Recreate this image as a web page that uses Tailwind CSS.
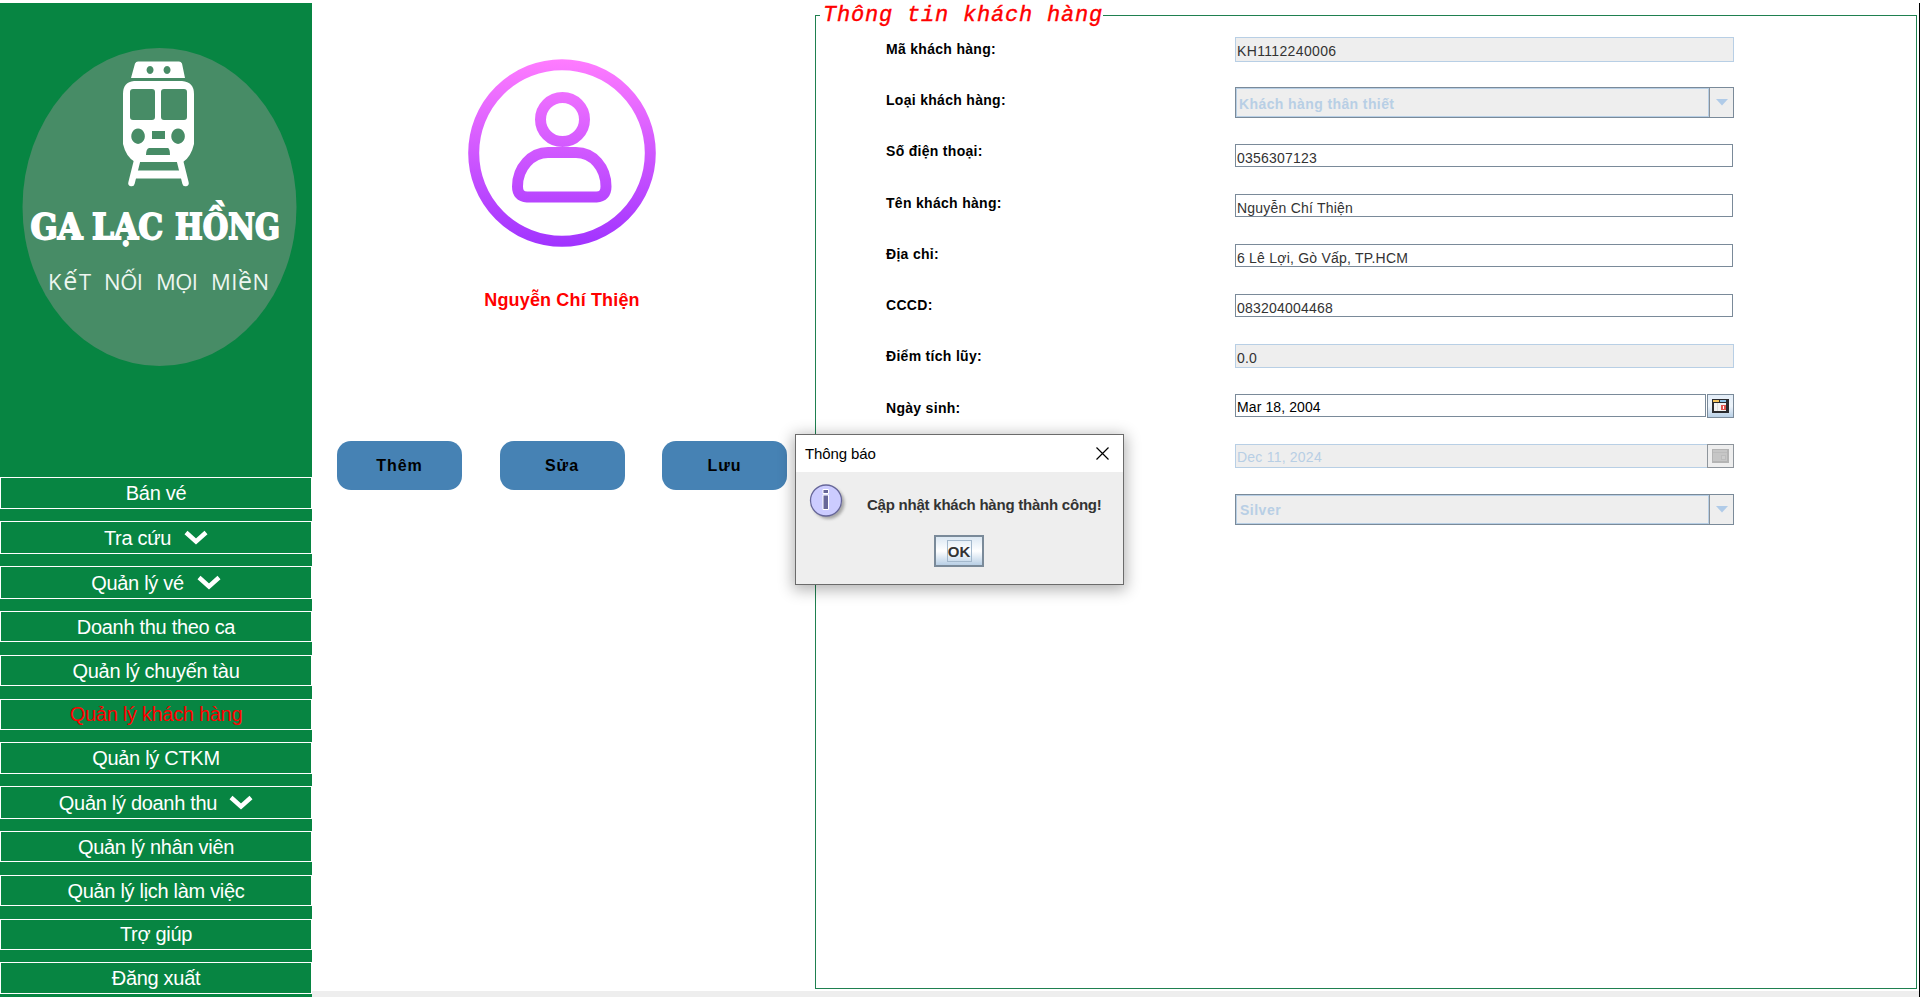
<!DOCTYPE html>
<html lang="vi">
<head>
<meta charset="utf-8">
<title>Ga Lạc Hồng</title>
<script src="https://cdn.jsdelivr.net/npm/@tailwindcss/browser@4"></script>
</head>
<body class="bg-white">
<div class="relative flex h-[997px] w-[1920px] overflow-hidden bg-white pt-[3px] font-['Liberation_Sans',Arial,sans-serif] text-black">
  <aside class="flex h-[994px] w-[312px] shrink-0 flex-col bg-[#078542]">
    <div class="h-[474px] shrink-0">
      <svg class="block overflow-visible" width="312" height="474" viewBox="0 3 312 474">
        <ellipse cx="159.500" cy="207" rx="137" ry="159" fill="#478c66"/>
        <g fill="#fff">
          <path fill-rule="evenodd" d="M138 61.500h41q2 0 3 2l3 14.500h-54l4-14.500q1-2 3-2zM150 66a3.500 4 0 1 0 .1 0zM167 66a3.500 4 0 1 0 .1 0z"/>
          <path fill-rule="evenodd" d="M134 81h48q12 1 12 13v50q-3 13-11 18h-48q-9-5-12-18V94q0-12 11-13zM133 89q-3 0-3 3v25q0 3 3 3h19q3 0 3-3V92q0-3-3-3zM164 89q-3 0-3 3v25q0 3 3 3h20q3 0 3-3V92q0-3-3-3zM138 128.500a6.800 7.700 0 1 0 .1 0zM178 128.500a6.800 7.700 0 1 0 .1 0zM152 131v8h13v-8zM149 148q-3 1-3 7h24q0-6-2-7z"/>
        </g>
        <path d="M137 161L131.500 183M180 161L185.500 183" stroke="#fff" stroke-width="6.500" stroke-linecap="round"/>
        <path d="M135 174.500h48" stroke="#fff" stroke-width="8"/>
        <g fill="#fff" stroke="#fff" stroke-width="1.800" font-family="DejaVu Serif, serif" font-weight="700" font-size="34.500">
          <text x="30.500" y="239" textLength="52" lengthAdjust="spacingAndGlyphs">GA</text>
          <text x="92" y="239" textLength="71" lengthAdjust="spacingAndGlyphs">LẠC</text>
          <text x="175" y="239" textLength="105" lengthAdjust="spacingAndGlyphs">HỒNG</text>
        </g>
        <g fill="#eef6f0" font-family="Open Sans, sans-serif" font-weight="400" font-size="22">
          <text x="48" y="290" textLength="43">K<tspan font-size="25">ế</tspan>T</text>
          <text x="104" y="290" textLength="39">NỐI</text>
          <text x="156" y="290" textLength="42">MỌI</text>
          <text x="211" y="290" textLength="58">MI<tspan font-size="25">ề</tspan>N</text>
        </g>
      </svg>
    </div>
    <nav class="flex flex-col text-[20px] tracking-[-0.3px] text-white">
      <a class="mb-[12px] flex h-[32px] items-center justify-center border border-white pb-px"><span>Bán vé</span></a>
      <a class="mb-[12px] flex h-[33px] items-center justify-center border border-white"><span>Tra cứu</span><svg class="ml-[13px]" width="24" height="15" viewBox="0 0 24 15"><path d="M2 2.500L12 11.500l10-9" fill="none" stroke="#fff" stroke-width="4.500"/></svg></a>
      <a class="mb-[12px] flex h-[33px] items-center justify-center border border-white"><span>Quản lý vé</span><svg class="ml-[13px]" width="24" height="15" viewBox="0 0 24 15"><path d="M2 2.500L12 11.500l10-9" fill="none" stroke="#fff" stroke-width="4.500"/></svg></a>
      <a class="mb-[13px] flex h-[31px] items-center justify-center border border-white"><span>Doanh thu theo ca</span></a>
      <a class="mb-[13px] flex h-[31px] items-center justify-center border border-white"><span>Quản lý chuyến tàu</span></a>
      <a class="mb-[12px] flex h-[31px] items-center justify-center border border-white pb-px text-[#f00]"><span>Quản lý khách hàng</span></a>
      <a class="mb-[12px] flex h-[32px] items-center justify-center border border-white"><span>Quản lý CTKM</span></a>
      <a class="mb-[12px] flex h-[33px] items-center justify-center border border-white"><span>Quản lý doanh thu</span><svg class="ml-[12px]" width="24" height="15" viewBox="0 0 24 15"><path d="M2 2.500L12 11.500l10-9" fill="none" stroke="#fff" stroke-width="4.500"/></svg></a>
      <a class="mb-[13px] flex h-[31px] items-center justify-center border border-white"><span>Quản lý nhân viên</span></a>
      <a class="mb-[13px] flex h-[31px] items-center justify-center border border-white"><span>Quản lý lịch làm việc</span></a>
      <a class="mb-[12px] flex h-[31px] items-center justify-center border border-white pb-0.5"><span>Trợ giúp</span></a>
      <a class="flex h-[32px] items-center justify-center border border-white"><span>Đăng xuất</span></a>
    </nav>
  </aside>

  <main class="flex h-[994px] grow flex-col border-r border-black">
    <div class="flex h-[988px]">
      <section class="flex w-[503px] shrink-0 flex-col items-center pt-[56px] pr-[3px]">
        <svg class="block" width="188" height="188" viewBox="0 0 188 188" fill="none">
          <defs><linearGradient id="g" gradientUnits="userSpaceOnUse" x1="94" y1="0" x2="94" y2="188"><stop offset="0" stop-color="#ff7cff"/><stop offset="1" stop-color="#a033ff"/></linearGradient></defs>
          <g stroke="url(#g)" stroke-width="11">
            <circle cx="94" cy="94" r="88.300"/>
            <circle cx="94.500" cy="60.500" r="22"/>
            <path d="M80 93.500h28c17 0 30 15 30 34q0 10-9.500 10.500H59q-9.500-.5-9.500-10.500c0-19 14-34 30.500-34z"/>
          </g>
        </svg>
        <h2 class="mt-[43px] text-[18px] leading-[21px] font-bold tracking-[0.15px] text-[#f00]"><span>Nguyễn Chí Thiện</span></h2>
        <div class="mt-[130px] flex gap-[37.5px] text-[16px] font-bold tracking-[1px]">
          <button class="h-[49px] w-[125px] rounded-[14px] bg-[#4682b4]">Thêm</button>
          <button class="h-[49px] w-[125px] rounded-[14px] bg-[#4682b4]">Sửa</button>
          <button class="h-[49px] w-[125px] rounded-[14px] bg-[#4682b4]">Lưu</button>
        </div>
      </section>

      <section class="relative mt-[12px] h-[974px] w-[1102px] border border-[#1f8050]">
        <h1 class="absolute top-[-14px] left-[4px] h-[26px] bg-white pl-[3px] font-['Liberation_Mono','Courier_New',monospace] text-[22px] leading-[27px] tracking-[0.8px] whitespace-pre text-[#f00] italic [-webkit-text-stroke:0.4px_#f00]">Thông tin khách hàng</h1>
        <div class="flex pl-[70px]">
          <div class="flex w-[349px] flex-col pt-[23px] text-[14px] leading-[21px] font-bold tracking-[0.3px]">
            <label class="h-[51px]">Mã khách hàng:</label>
            <label class="h-[51px]">Loại khách hàng:</label>
            <label class="h-[52px]">Số điện thoại:</label>
            <label class="h-[51px]">Tên khách hàng:</label>
            <label class="h-[51px]">Địa chỉ:</label>
            <label class="h-[51px]">CCCD:</label>
            <label class="h-[52px]">Điểm tích lũy:</label>
            <label class="h-[51px]">Ngày sinh:</label>
          </div>
          <div class="flex w-[499px] flex-col pt-[21px] text-[14px] tracking-[0.22px] text-[#333]">
            <div class="flex h-[25px] items-center border border-[#b8cfe5] bg-[#eee] pt-[3px] pl-px tracking-[0.35px]">KH1112240006</div>
            <div class="mt-[25px] flex h-[31px] border border-[#7a8a99] font-bold tracking-[0.4px] text-[#b8cfe5]">
              <div class="flex grow items-center border border-[#b8cfe5] bg-[#eee] pt-[3px] pl-[2px]">Khách hàng thân thiết</div>
              <div class="flex w-[24px] items-center justify-center border-l border-[#8a929a] bg-[#eee]"><svg width="12" height="7" viewBox="0 0 12 7"><path d="M0 0h12L6 6.500z" fill="#b0cbe8"/></svg></div>
            </div>
            <div class="mt-[26px] mr-px flex h-[23px] items-center border border-[#7a8a99] pt-[5px] pl-px">0356307123</div>
            <div class="mt-[27px] mr-px flex h-[23px] items-center border border-[#7a8a99] pt-[5px] pl-px">Nguyễn Chí Thiện</div>
            <div class="mt-[27px] mr-px flex h-[23px] items-center border border-[#7a8a99] pt-[5px] pl-px">6 Lê Lợi, Gò Vấp, TP.HCM</div>
            <div class="mt-[27px] mr-px flex h-[23px] items-center border border-[#7a8a99] pt-[5px] pl-px">083204004468</div>
            <div class="mt-[27px] flex h-[24px] items-center border border-[#b8cfe5] bg-[#eee] pt-[4px] pl-px">0.0</div>
            <div class="mt-[26px] flex h-[24px] justify-between">
              <div class="flex h-[23px] w-[471px] items-center border border-[#7a8a99] pt-[4px] pl-px tracking-[0.1px] text-black">Mar 18, 2004</div>
              <div class="flex h-[24px] w-[27px] items-center justify-center border border-[#7a8a99] bg-gradient-to-b from-[#e4eef8] via-[#eef4fa] to-[#b8cfe5]">
                <svg width="17" height="14" viewBox="0 0 17 14" shape-rendering="crispEdges"><path fill="#2b2b2e" d="M0 0h17v14H0z"/><path fill="#f3c25a" d="M1 1h6v2H1z"/><path fill="#8cc4e8" d="M8 1h6v2H8z"/><path fill="#f2f2f2" d="M2 4h12v8H2z"/><path fill="#ddd" d="M5 4h1v8H5z"/><path fill="#e0544e" d="M9 6h5v5H9z"/><path fill="#fff" d="M11 7h1v3h-1z"/></svg>
              </div>
            </div>
            <div class="mt-[26px] flex h-[24px]">
              <div class="flex grow items-center border border-r-0 border-[#b8cfe5] bg-[#eee] pt-[3px] pl-px tracking-[0.22px] text-[#b8cfe5]">Dec 11, 2024</div>
              <div class="flex w-[27px] items-center justify-center border border-[#8e959c] bg-[#eee]">
                <svg width="17" height="14" viewBox="0 0 17 14" shape-rendering="crispEdges"><path fill="#b4b4b4" d="M0 0h17v14H0z"/><path fill="#c6c6c6" d="M1 1h14v11H1z"/><path fill="#bcbcbc" d="M1 3h14v1H1zM9 6h5v5H9z"/><path fill="#ccc" d="M10 7h3v3h-3z"/></svg>
              </div>
            </div>
            <div class="mt-[26px] flex h-[31px] border border-[#7a8a99] font-bold text-[#b8cfe5]">
              <div class="flex grow items-center border border-[#b8cfe5] bg-[#eee] pt-px pl-[3px] tracking-[0.5px]">Silver</div>
              <div class="flex w-[24px] items-center justify-center border-l border-[#8a929a] bg-[#eee]"><svg width="12" height="7" viewBox="0 0 12 7"><path d="M0 0h12L6 6.500z" fill="#b0cbe8"/></svg></div>
            </div>
          </div>
        </div>
      </section>
    </div>
    <div class="h-[6px] bg-[#eee]"></div>
  </main>

  <div role="dialog" class="absolute top-[434px] left-[795px] flex h-[151px] w-[329px] flex-col border border-[#6b6b6b] bg-[#eee] shadow-[0_3px_14px_2px_rgba(0,0,0,0.3)]">
    <div class="flex h-[37px] items-center justify-between bg-white pt-px pr-[14px] pl-[9px]">
      <span class="text-[15px] tracking-[-0.1px] text-black">Thông báo</span>
      <svg class="mb-px" width="13" height="13" viewBox="0 0 13 13"><path d="M.5.500l12 12M12.500.500l-12 12" stroke="#000" stroke-width="1.200"/></svg>
    </div>
    <div class="flex h-[63px] pl-[13px]">
      <svg class="mt-[11px] shrink-0" width="40" height="40" viewBox="0 0 40 40">
        <defs><filter id="b"><feGaussianBlur stdDeviation="1.500"/></filter></defs>
        <circle cx="19.500" cy="20" r="16" fill="#888" opacity=".7" filter="url(#b)"/>
        <circle cx="17" cy="17.500" r="15.500" fill="#ccf" stroke="#669" stroke-width="1.300"/>
        <path d="M14 6.500h5.500v4H14zM14 12h5.500v14.500H14z" fill="#669" stroke="#fff"/>
      </svg>
      <p class="mt-[24px] ml-[18px] text-[15px] leading-[18px] font-bold tracking-[-0.23px] whitespace-nowrap text-[#333]">Cập nhật khách hàng thành công!</p>
    </div>
    <button class="ml-[138px] flex h-[32px] w-[50px] items-center justify-center border-2 border-[#7a8a99] bg-gradient-to-b from-[#dce8f3] via-white to-[#b8cfe5] text-[15px] font-bold text-[#333]"><span class="flex h-[22px] w-[25px] items-center justify-center border border-[#a3b8cc] pt-[3px]">OK</span></button>
  </div>
</div>
</body>
</html>
